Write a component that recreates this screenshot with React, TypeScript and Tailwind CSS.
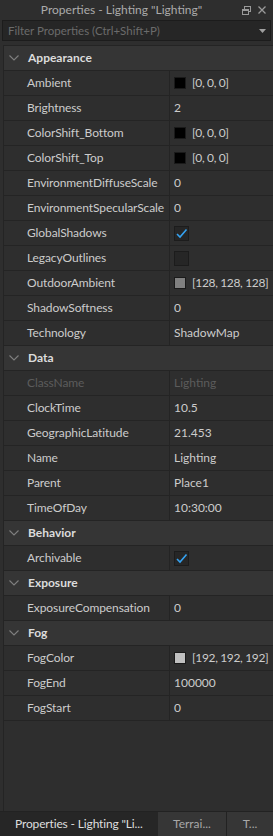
import React from "react";

type Prop = {
  name: string;
  value?: string;
  swatch?: string;
  check?: boolean;
  disabled?: boolean;
};

type Section = { title: string; props: Prop[] };

const sections: Section[] = [
  {
    title: "Appearance",
    props: [
      { name: "Ambient", value: "[0, 0, 0]", swatch: "#000000" },
      { name: "Brightness", value: "2" },
      { name: "ColorShift_Bottom", value: "[0, 0, 0]", swatch: "#000000" },
      { name: "ColorShift_Top", value: "[0, 0, 0]", swatch: "#000000" },
      { name: "EnvironmentDiffuseScale", value: "0" },
      { name: "EnvironmentSpecularScale", value: "0" },
      { name: "GlobalShadows", check: true },
      { name: "LegacyOutlines", check: false },
      { name: "OutdoorAmbient", value: "[128, 128, 128]", swatch: "#808080" },
      { name: "ShadowSoftness", value: "0" },
      { name: "Technology", value: "ShadowMap" },
    ],
  },
  {
    title: "Data",
    props: [
      { name: "ClassName", value: "Lighting", disabled: true },
      { name: "ClockTime", value: "10.5" },
      { name: "GeographicLatitude", value: "21.453" },
      { name: "Name", value: "Lighting" },
      { name: "Parent", value: "Place1" },
      { name: "TimeOfDay", value: "10:30:00" },
    ],
  },
  {
    title: "Behavior",
    props: [{ name: "Archivable", check: true }],
  },
  {
    title: "Exposure",
    props: [{ name: "ExposureCompensation", value: "0" }],
  },
  {
    title: "Fog",
    props: [
      { name: "FogColor", value: "[192, 192, 192]", swatch: "#c0c0c0" },
      { name: "FogEnd", value: "100000" },
      { name: "FogStart", value: "0" },
    ],
  },
];

function Chevron() {
  return (
    <svg width="10" height="6" viewBox="0 0 10 6" className="ml-[5px] mr-[9px]">
      <polyline points="0.5,0.5 5,5 9.5,0.5" fill="none" stroke="#7f7f7f" strokeWidth="1.1" />
    </svg>
  );
}

function Checkbox({ on }: { on: boolean }) {
  return (
    <div className="flex h-[15px] w-[15px] items-center justify-center border border-[#1c1c1c] bg-[#262626]">
      {on ? (
        <svg width="13" height="13" viewBox="0 0 13 13">
          <polyline points="2,7 5,10 11.5,2.5" fill="none" stroke="#35a3f2" strokeWidth="1.6" />
        </svg>
      ) : null}
    </div>
  );
}

function PropRow({ p }: { p: Prop }) {
  const text = p.disabled ? "text-[#5c5c5c]" : "text-[#cccccc]";
  return (
    <div className="flex h-[25px] border-b border-[#242424]">
      <div className={`flex w-[166px] items-center whitespace-nowrap border-r border-[#242424] pl-[23px] tracking-[-0.1px] ${text}`}>
        {p.name}
      </div>
      <div className={`flex flex-1 items-center whitespace-nowrap pl-[4px] ${text}`}>
        {p.check !== undefined ? <Checkbox on={p.check} /> : null}
        {p.swatch ? (
          <span
            className="mr-[6px] h-[12px] w-[12px] shrink-0 border border-[#1a1a1a]"
            style={{ backgroundColor: p.swatch }}
          />
        ) : null}
        <span className={p.swatch ? "tracking-[-0.35px]" : ""}>{p.value}</span>
      </div>
    </div>
  );
}

export default function App() {
  return (
    <div className="flex h-[836px] w-[273px] flex-col overflow-hidden bg-[#2e2e2e] font-['Lato',sans-serif] text-[12px] leading-none">
      {/* title bar */}
      <div className="flex h-[20px] items-center">
        <div className="flex-1 pl-[1px] text-center text-[12px] text-[#ababab]">Properties - Lighting "Lighting"</div>
        <div className="flex items-center gap-[7px] pr-[7px]">
          <svg width="9" height="9" viewBox="0 0 9 9">
            <rect x="2.5" y="0.5" width="6" height="5" fill="none" stroke="#9a9a9a" />
            <rect x="0.5" y="3.5" width="6" height="5" fill="#2e2e2e" stroke="#9a9a9a" />
            <line x1="0.5" y1="4.5" x2="6.5" y2="4.5" stroke="#9a9a9a" />
          </svg>
          <svg width="8" height="8" viewBox="0 0 8 8">
            <path d="M0.5 0.5 L7.5 7.5 M7.5 0.5 L0.5 7.5" stroke="#9a9a9a" strokeWidth="1.3" />
          </svg>
        </div>
      </div>

      {/* filter */}
      <div className="px-[2px]">
        <div className="flex h-[21px] items-center border border-[#1c1c1c] bg-[#262626] pl-[5px] pr-[4px]">
          <span className="flex-1 text-[11.5px] text-[#6b6b6b]">Filter Properties (Ctrl+Shift+P)</span>
          <svg width="7" height="4" viewBox="0 0 7 4">
            <polygon points="0,0 7,0 3.5,4" fill="#a0a0a0" />
          </svg>
        </div>
      </div>

      {/* property grid */}
      <div className="ml-[3px] mt-[4px] flex-1 border-l border-t border-[#242424]">
        {sections.map((s) => (
          <div key={s.title}>
            <div className="flex h-[25px] items-center border-b border-[#242424] bg-[#353535] font-bold text-[#dcdcdc]">
              <Chevron />
              {s.title}
            </div>
            {s.props.map((p) => (
              <PropRow key={p.name} p={p} />
            ))}
          </div>
        ))}
      </div>

      {/* tabs */}
      <div className="flex h-[25px] border-t border-[#222222]">
        <div className="flex w-[158px] items-center whitespace-nowrap bg-[#262626] pl-[15px] tracking-[-0.15px] text-[#dedede]">
          Properties - Lighting "Li...
        </div>
        <div className="flex w-[69px] items-center justify-center border-r border-[#222222] bg-[#363636] text-[#a8a8a8]">
          Terrai...
        </div>
        <div className="flex flex-1 items-center justify-center bg-[#363636] text-[#a8a8a8]">T...</div>
      </div>
    </div>
  );
}
